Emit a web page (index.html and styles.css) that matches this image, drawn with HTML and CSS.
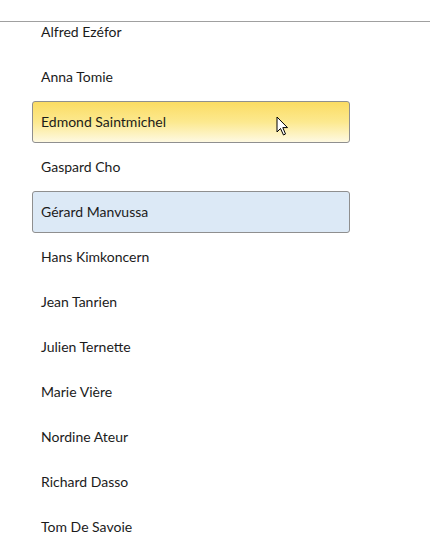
FILE: index.html
```html
<!DOCTYPE html>
<html>
<head>
<meta charset="utf-8">
<link rel="stylesheet" href="styles.css">
</head>
<body>
<div class="topbar"></div>
<div class="viewport">
  <ul class="list">
    <li class="item">Alfred Ezéfor</li>
    <li class="item">Anna Tomie</li>
    <li class="item hover">Edmond Saintmichel
      <svg class="cursor" width="14" height="21" viewBox="0 0 14 21"><path d="M1 1 L1 16 L4.5 12.5 L7.5 19 L9.5 18 L6.8 11.6 L11.5 11.6 Z" fill="#fff" stroke="#000" stroke-width="1" stroke-linejoin="miter"/></svg>
    </li>
    <li class="item">Gaspard Cho</li>
    <li class="item selected">Gérard Manvussa</li>
    <li class="item">Hans Kimkoncern</li>
    <li class="item">Jean Tanrien</li>
    <li class="item">Julien Ternette</li>
    <li class="item">Marie Vière</li>
    <li class="item">Nordine Ateur</li>
    <li class="item">Richard Dasso</li>
    <li class="item">Tom De Savoie</li>
  </ul>
</div>
</body>
</html>
```
FILE: styles.css
```css
html, body {
  margin: 0;
  padding: 0;
  background: #fff;
}
body {
  width: 430px;
  height: 556px;
  overflow: hidden;
  font-family: Lato, "Open Sans", sans-serif;
  font-size: 14px;
  color: #1b1b1b;
}
.topbar {
  height: 21px;
  border-bottom: 1px solid #a0a0a0;
}
.viewport {
  height: 534px;
  overflow: hidden;
}
.list {
  list-style: none;
  margin: -11px 0 0 32px;
  padding: 0;
  width: 318px;
  display: flex;
  flex-direction: column;
  gap: 3px;
}
.item {
  position: relative;
  box-sizing: border-box;
  height: 42px;
  display: flex;
  align-items: center;
  padding: 0 0 2px 8px;
  border: 1px solid transparent;
  border-radius: 3px;
}
.item.hover {
  border-color: #8f8f8f;
  background: linear-gradient(to bottom, #fbdc63 0%, #fce98f 50%, #fef9e2 100%);
}
.item.selected {
  border-color: #8f8f8f;
  background: #dce9f6;
}
.cursor {
  position: absolute;
  left: 243px;
  top: 14px;
}
```
